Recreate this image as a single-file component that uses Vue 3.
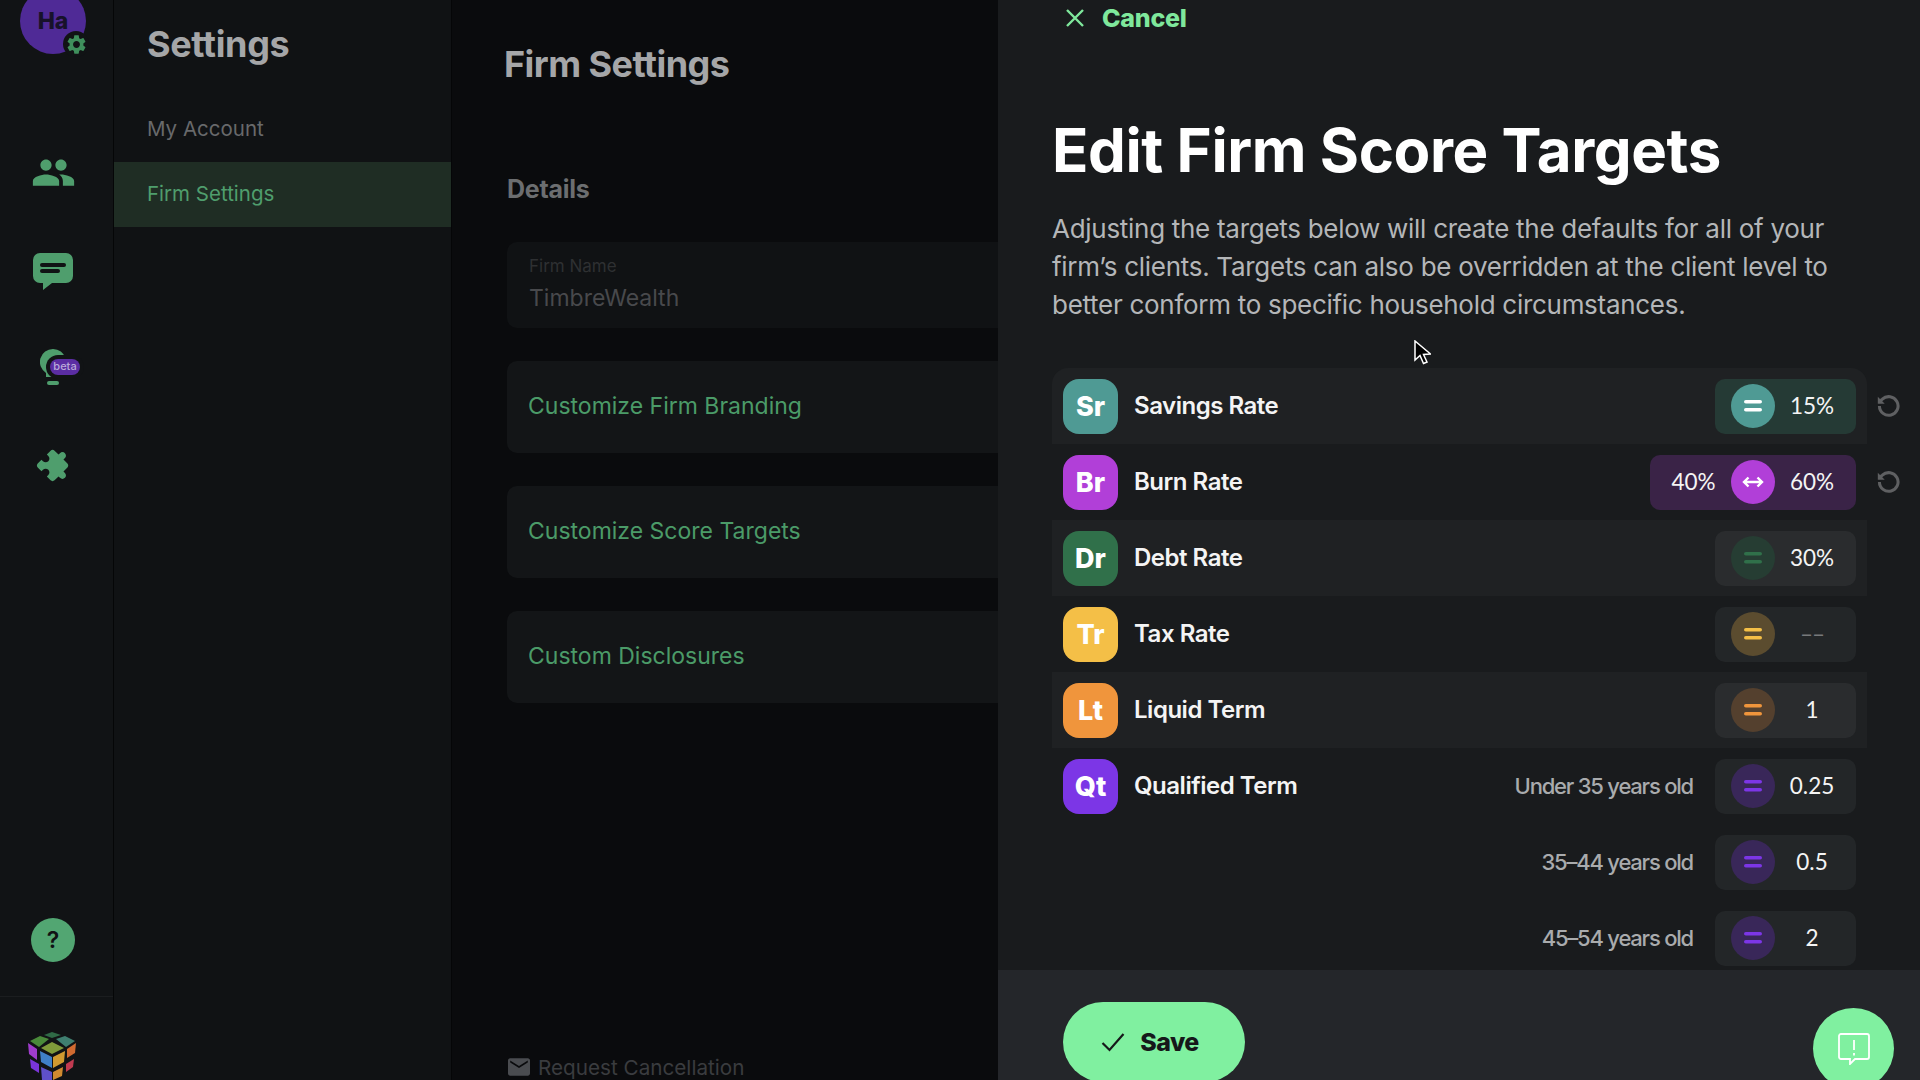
<script setup>
const rows = [
  { id: 'sr', code: 'Sr', name: 'Savings Rate', badge: '#4f9a94', pill: '#253a35', circle: '#4f9a94', bar: '#ffffff', value: '15%', reset: true, stripe: true, first: true },
  { id: 'br', code: 'Br', name: 'Burn Rate', badge: '#b13fd8', pill: '#3a2347', circle: '#b13fd8', bar: '#ffffff', low: '40%', value: '60%', range: true, reset: true },
  { id: 'dr', code: 'Dr', name: 'Debt Rate', badge: '#30704a', pill: '#2a2c2e', circle: '#263d33', bar: '#30704a', value: '30%', stripe: true },
  { id: 'tr', code: 'Tr', name: 'Tax Rate', badge: '#f4bf47', pill: '#232628', circle: '#5b4c2f', bar: '#f4bf47', value: '––', muted: true },
  { id: 'lt', code: 'Lt', name: 'Liquid Term', badge: '#f0953c', pill: '#2a2c2e', circle: '#54402e', bar: '#f0953c', value: '1', stripe: true },
  { id: 'qt', code: 'Qt', name: 'Qualified Term', badge: '#7c36e6', pill: '#232628', circle: '#392759', bar: '#7c36e6', value: '0.25', age: 'Under 35 years old' },
  { id: 'q2', pill: '#232628', circle: '#392759', bar: '#7c36e6', value: '0.5', age: '35–44 years old' },
  { id: 'q3', pill: '#232628', circle: '#392759', bar: '#7c36e6', value: '2', age: '45–54 years old' },
]
const cards = ['Customize Firm Branding', 'Customize Score Targets', 'Custom Disclosures']
</script>

<template>
  <div class="app">
    <aside class="rail">
      <div class="avatar">
        <span>Ha</span>
        <span class="gear">
          <svg viewBox="0 0 24 24" width="23" height="23"><path fill="#3f8f5c" d="M19.14 12.94c.04-.3.06-.61.06-.94s-.02-.64-.07-.94l2.03-1.58c.18-.14.23-.41.12-.61l-1.92-3.32c-.12-.22-.37-.29-.59-.22l-2.39.96c-.5-.38-1.03-.7-1.62-.94l-.36-2.54c-.04-.24-.24-.41-.48-.41h-3.84c-.24 0-.43.17-.47.41l-.36 2.54c-.59.24-1.13.57-1.62.94l-2.39-.96c-.22-.08-.47 0-.59.22L2.74 8.87c-.12.21-.08.47.12.61l2.03 1.58c-.05.3-.09.63-.09.94s.02.64.07.94l-2.03 1.58c-.18.14-.23.41-.12.61l1.92 3.32c.12.22.37.29.59.22l2.39-.96c.5.38 1.03.7 1.62.94l.36 2.54c.05.24.24.41.48.41h3.84c.24 0 .44-.17.47-.41l.36-2.54c.59-.24 1.13-.56 1.62-.94l2.39.96c.22.08.47 0 .59-.22l1.92-3.32c.12-.22.07-.47-.12-.61l-2.01-1.58zM12 15.6c-1.98 0-3.6-1.62-3.6-3.6s1.62-3.6 3.6-3.6 3.6 1.62 3.6 3.6-1.62 3.6-3.6 3.6z"/></svg>
        </span>
      </div>
      <nav class="nav">
        <div class="nav-item">
          <svg viewBox="0 0 24 24" width="45" height="45"><path fill="#4f9e6d" d="M16 11c1.66 0 2.99-1.34 2.99-3S17.66 5 16 5c-1.66 0-3 1.34-3 3s1.34 3 3 3zm-8 0c1.66 0 2.99-1.34 2.99-3S9.66 5 8 5C6.34 5 5 6.34 5 8s1.34 3 3 3zm0 2c-2.33 0-7 1.17-7 3.5V19h14v-2.5c0-2.33-4.67-3.5-7-3.5zm8 0c-.29 0-.62.02-.97.05 1.16.84 1.97 1.97 1.97 3.45V19h6v-2.5c0-2.33-4.67-3.5-7-3.5z"/></svg>
        </div>
        <div class="nav-item">
          <svg viewBox="0 -2 40 39" width="40" height="39"><path fill="#4f9e6d" d="M7 0h26a7 7 0 0 1 7 7v16a7 7 0 0 1-7 7H19l-9 7 0-7H7a7 7 0 0 1-7-7V7a7 7 0 0 1 7-7z"/><rect x="7" y="10" width="26" height="4" rx="2" fill="#101214"/><rect x="7" y="16" width="20" height="4" rx="2" fill="#101214"/></svg>
        </div>
        <div class="nav-item">
          <svg viewBox="0 0 26 37" width="26" height="37"><path fill="#4f9e6d" d="M13 0a13 13 0 0 0-7 24v4h14v-4A13 13 0 0 0 13 0z"/><rect x="7" y="32" width="12" height="4" rx="2" fill="#4f9e6d"/></svg>
          <span class="beta">beta</span>
        </div>
        <div class="nav-item">
          <svg viewBox="0 0 24 24" width="35" height="35" style="overflow:visible"><g transform="translate(1.4 0) rotate(45 12 12) translate(12 12) scale(.96) translate(-12 -12)"><path fill="#4f9e6d" d="M20.5 11H19V7c0-1.1-.9-2-2-2h-4V3.5C13 2.12 11.88 1 10.5 1S8 2.12 8 3.5V5H4c-1.1 0-1.99.9-1.99 2v3.8H3.5c1.49 0 2.7 1.21 2.7 2.7s-1.21 2.7-2.7 2.7H2V20c0 1.1.9 2 2 2h3.8v-1.5c0-1.49 1.21-2.7 2.7-2.7 1.49 0 2.7 1.21 2.7 2.7V22H17c1.1 0 2-.9 2-2v-4h1.5c1.38 0 2.5-1.12 2.5-2.5S21.88 11 20.5 11z"/></g></svg>
        </div>
      </nav>
      <div class="help">?</div>
      <div class="cube-wrap">
        <svg viewBox="29 1031 50 50" width="50" height="50">
          <polygon points="53,1032 62,1035 53,1038 45,1035" fill="#2f6a46"/>
          <polygon points="41,1036 50,1039 40,1047 31,1041" fill="#4a8a3a"/>
          <polygon points="66,1036 76,1041 67,1047 57,1039" fill="#3f7f70"/>
          <polygon points="53,1042 65,1048 53,1054 42,1048" fill="#7f9a3a"/>
          <polygon points="29,1043 38,1049 38,1060 30,1054" fill="#a03ccc"/>
          <polygon points="41,1051 53,1057 53,1068 42,1062" fill="#3f80c8"/>
          <polygon points="31,1059 40,1064 40,1073 32,1068" fill="#7a35d8"/>
          <polygon points="42,1067 53,1072 53,1080 43,1080" fill="#5f50c8"/>
          <polygon points="54,1057 66,1051 65,1062 54,1068" fill="#d09a30"/>
          <polygon points="68,1049 77,1043 76,1053 68,1058" fill="#d06a30"/>
          <polygon points="67,1064 75,1059 74,1067 67,1072" fill="#c03a50"/>
          <polygon points="54,1072 64,1067 63,1076 54,1080" fill="#d08a30"/>
        </svg>
      </div>
    </aside>

    <section class="panel">
      <h2 class="panel-title">Settings</h2>
      <div class="panel-link">My Account</div>
      <div class="panel-link active">Firm Settings</div>
    </section>

    <main class="main">
      <h1 class="main-title">Firm Settings</h1>
      <h3 class="details">Details</h3>
      <div class="field">
        <span class="field-label">Firm Name</span>
        <span class="field-value">TimbreWealth</span>
      </div>
      <div v-for="c in cards" :key="c" class="card">{{ c }}</div>
      <div class="cancel-req">
        <svg viewBox="2 4 20 16" width="22" height="18"><path fill="#4a4c50" d="M20 4H4c-1.1 0-2 .9-2 2v12c0 1.1.9 2 2 2h16c1.1 0 2-.9 2-2V6c0-1.1-.9-2-2-2zm0 4-8 5-8-5V6l8 5 8-5v2z"/></svg>
        <span>Request Cancellation</span>
      </div>
    </main>

    <section class="drawer">
      <div class="drawer-body">
        <div class="cancel">
          <svg viewBox="0 0 18 18" width="18" height="18"><path d="M1 1l16 16M17 1L1 17" stroke="#7fe89c" stroke-width="2.4" fill="none"/></svg>
          <span>Cancel</span>
        </div>
        <h1 class="title">Edit Firm Score Targets</h1>
        <p class="intro">Adjusting the targets below will create the defaults for all of your<br>firm’s clients. Targets can also be overridden at the client level to<br>better conform to specific household circumstances.</p>
        <div class="list">
          <div v-for="r in rows" :key="r.id" class="row" :class="{ stripe: r.stripe, first: r.first }">
            <template v-if="r.code">
              <span class="badge" :style="{ background: r.badge }">{{ r.code }}</span>
              <span class="name">{{ r.name }}</span>
            </template>
            <span v-if="r.age" class="age">{{ r.age }}</span>
            <div class="pill" :style="{ background: r.pill }">
              <span v-if="r.low" class="val low">{{ r.low }}</span>
              <span class="circle" :style="{ background: r.circle }">
                <svg v-if="r.range" viewBox="0 0 24 14" width="24" height="14"><path d="M3 7h18M7.5 2.5 3 7l4.5 4.5M16.5 2.5 21 7l-4.5 4.5" stroke="#fff" stroke-width="2.4" fill="none"/></svg>
                <svg v-else viewBox="0 0 18 12" width="18" height="12"><rect y="0" width="18" height="3.6" rx="1.8" :fill="r.bar"/><rect y="8" width="18" height="3.6" rx="1.8" :fill="r.bar"/></svg>
              </span>
              <span class="val" :class="{ muted: r.muted }">{{ r.value }}</span>
            </div>
            <svg v-if="r.reset" class="reset" viewBox="0 0 24 24" width="26" height="26"><path d="M5 12a8.6 8.6 0 1 0 2.7-6.3L4.5 8.5" stroke="#5f6062" stroke-width="2.8" fill="none"/><path d="M3.5 3.5v6.4h6.4z" fill="#5f6062"/></svg>
          </div>
        </div>
      </div>
      <footer class="footer">
        <button class="save">
          <svg viewBox="0 0 24 20" width="24" height="20"><path d="M1.5 11l7 7L22.5 2" stroke="#16181a" stroke-width="2.2" fill="none"/></svg>
          <span>Save</span>
        </button>
        <div class="feedback">
          <svg viewBox="0 0 32 32" width="32" height="32"><path d="M3 1h26a2 2 0 0 1 2 2v21a2 2 0 0 1-2 2H17l-5 5v-5H3a2 2 0 0 1-2-2V3a2 2 0 0 1 2-2z" stroke="#fff" stroke-width="1.8" fill="none"/><path d="M16 7v10M16 20v2.5" stroke="#fff" stroke-width="1.8"/></svg>
        </div>
      </footer>
      <svg class="cursor" viewBox="0 0 17 25" width="17" height="25"><path d="M1 1v19l5-4.5 3.5 8 3.5-1.5-3.5-7.5 7-.5z" fill="#000" stroke="#fff" stroke-width="1.5"/></svg>
    </section>
  </div>
</template>

<style>
html, body { margin: 0; background: #0a0b0d; }
</style>

<style scoped>
.app {
  display: flex;
  width: 1920px;
  height: 1080px;
  overflow: hidden;
  font-family: Inter, "Liberation Sans", sans-serif;
}
h1, h2, h3, p { margin: 0; }

.rail {
  width: 114px;
  flex: none;
  box-sizing: border-box;
  padding-right: 7px;
  background: #111315;
  display: flex;
  flex-direction: column;
  align-items: center;
  border-right: 1px solid #050607;
}
.avatar {
  position: relative;
  width: 66px;
  height: 66px;
  flex: none;
  margin-top: -12px;
  border-radius: 50%;
  background: #4f2a96;
  color: #17122a;
  font-weight: 800;
  font-size: 23px;
  display: flex;
  align-items: center;
  justify-content: center;
  box-sizing: border-box;
}
.gear {
  position: absolute;
  right: -3px;
  bottom: -3px;
  width: 26px;
  height: 26px;
  border-radius: 50%;
  background: #111315;
  display: flex;
  align-items: center;
  justify-content: center;
}
.nav { margin-top: 70px; display: flex; flex-direction: column; align-self: stretch; }
.nav-item {
  height: 97.6px;
  display: flex;
  align-items: center;
  justify-content: center;
  position: relative;
}
.beta {
  position: absolute;
  left: 50px;
  top: 40px;
  width: 30px;
  height: 16px;
  line-height: 15px;
  text-align: center;
  border-radius: 8px;
  background: #5b2da3;
  box-shadow: 0 0 0 4px #111315;
  color: #b9a9d9;
  font-size: 11px;
  font-weight: 500;
}
.help {
  margin-top: auto;
  width: 44px;
  height: 44px;
  flex: none;
  border-radius: 50%;
  background: #52a672;
  color: #101214;
  font-weight: 600;
  font-size: 23px;
  display: flex;
  align-items: center;
  justify-content: center;
}
.cube-wrap {
  margin: 34px -7px 0 0;
  align-self: stretch;
  height: 84px;
  flex: none;
  box-sizing: border-box;
  border-top: 1px solid #1b1d1f;
  padding: 34px 7px 0 0;
  display: flex;
  justify-content: center;
}

.panel {
  width: 338px;
  flex: none;
  box-sizing: border-box;
  background: #101214;
  border-right: 1px solid #050607;
}
.panel-title {
  height: 89px;
  margin-bottom: 8px;
  padding-left: 33px;
  line-height: 89px;
  font-size: 36px;
  font-weight: 700;
  letter-spacing: -0.01em;
  color: #a5a6a8;
}
.panel-link {
  height: 65px;
  line-height: 64px;
  padding-left: 33px;
  font-size: 20.5px;
  color: #68696b;
}
.panel-link.active { background: #1f2d24; color: #4f9e6d; }

.main {
  width: 546px;
  flex: none;
  background: #0a0b0d;
  overflow: hidden;
  padding: 0 0 1px 55px;
  box-sizing: border-box;
  display: flex;
  flex-direction: column;
}
.main-title {
  margin: 44px 0 0 -3px;
  height: 40px;
  line-height: 40px;
  font-size: 36px;
  font-weight: 700;
  letter-spacing: -0.015em;
  color: #a5a6a8;
}
.details {
  margin-top: 89px;
  height: 32px;
  line-height: 32px;
  font-size: 25px;
  font-weight: 700;
  letter-spacing: -0.01em;
  color: #6c6e70;
}
.field {
  margin-top: 37px;
  width: 700px;
  height: 86px;
  flex: none;
  box-sizing: border-box;
  border-radius: 10px;
  background: #101214;
  padding: 14px 0 0 22px;
  display: flex;
  flex-direction: column;
}
.field-label { font-size: 17px; line-height: 20px; color: #2e3032; }
.field-value { font-size: 23px; line-height: 34px; margin-top: 5px; color: #48494c; }
.card {
  width: 700px;
  height: 92px;
  flex: none;
  margin-top: 33px;
  box-sizing: border-box;
  border-radius: 10px;
  background: #131517;
  padding-left: 21px;
  line-height: 91px;
  font-size: 23px;
  color: #4b9b68;
}
.cancel-req {
  margin-top: auto;
  height: 24px;
  padding-left: 1px;
  display: flex;
  align-items: center;
  gap: 8px;
  font-size: 20.7px;
  color: #3a3c3f;
}

.drawer {
  position: relative;
  width: 922px;
  flex: none;
  background: #191b1d;
  display: flex;
  flex-direction: column;
  color: #fff;
}
.drawer-body { height: 970px; flex: none; overflow: hidden; }
.cancel {
  height: 36px;
  padding-left: 68px;
  display: flex;
  align-items: center;
  gap: 18px;
  font-size: 25px;
  font-weight: 800;
  letter-spacing: -0.01em;
  color: #7fe89c;
}
.title {
  margin: 79px 0 0 54px;
  height: 70px;
  line-height: 70px;
  font-size: 60px;
  font-weight: 700;
  letter-spacing: -0.42px;
  color: #fff;
}
.intro {
  margin: 25px 0 0 54px;
  font-size: 26px;
  line-height: 38px;
  letter-spacing: -0.011em;
  color: #b4b6b8;
}
.list { margin: 44px 53px 0 54px; }
.row {
  position: relative;
  height: 76px;
  padding: 0 11px;
  box-sizing: border-box;
  display: flex;
  align-items: center;
}
.row.stripe { background: #1f2123; }
.row.first { border-radius: 16px 16px 0 0; }
.badge {
  width: 55px;
  height: 55px;
  flex: none;
  border-radius: 16px;
  display: flex;
  align-items: center;
  justify-content: center;
  font-size: 27px;
  font-weight: 800;
  color: #fff;
}
.name {
  margin-left: 16px;
  padding-bottom: 2px;
  font-size: 24px;
  font-weight: 600;
  letter-spacing: -0.02em;
  color: #f4f4f4;
}
.age {
  margin-left: auto;
  padding-bottom: 1px;
  font-size: 22px;
  font-weight: 500;
  letter-spacing: -0.055em;
  color: #a9abad;
}
.pill {
  margin-left: 22px;
  height: 55px;
  border-radius: 10px;
  padding: 0 7px 0 16px;
  display: flex;
  align-items: center;
  box-sizing: border-box;
}
.name + .pill { margin-left: auto; }
.circle {
  width: 44px;
  height: 44px;
  flex: none;
  border-radius: 50%;
  display: flex;
  align-items: center;
  justify-content: center;
}
.val {
  width: 74px;
  text-align: center;
  font-family: Lato, sans-serif;
  font-size: 22.5px;
  color: #f4f4f4;
  padding-bottom: 1px;
}
.val.low { width: 55px; margin-right: 10px; }
.val.muted { color: #77797b; letter-spacing: -1px; }
.reset { position: absolute; right: -33px; top: 25px; }

.footer {
  position: relative;
  flex: 1;
  background: #24262a;
  box-sizing: border-box;
  padding: 32px 0 0 65px;
  overflow: hidden;
}
.save {
  width: 182px;
  height: 80px;
  border: 0;
  border-radius: 40px;
  background: #80f0a0;
  color: #16181a;
  font-family: inherit;
  font-size: 25px;
  font-weight: 800;
  letter-spacing: -0.02em;
  display: flex;
  align-items: center;
  justify-content: center;
  gap: 15px;
  padding: 0 8px 0 0;
}
.feedback {
  position: absolute;
  left: 815px;
  top: 38px;
  width: 81px;
  height: 81px;
  border-radius: 50%;
  background: #80f0a0;
  display: flex;
  align-items: center;
  justify-content: center;
}
.cursor { position: absolute; left: 416px; top: 340px; }
</style>
